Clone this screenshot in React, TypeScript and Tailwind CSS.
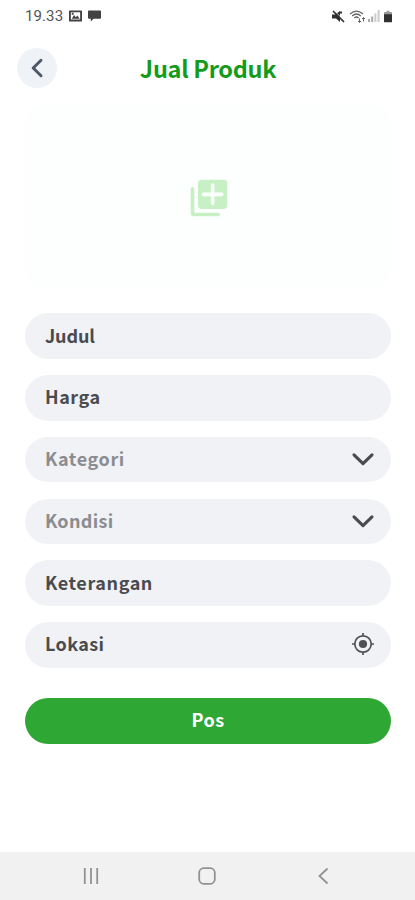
import type { ReactNode } from "react";

const FIELDS = [
  { label: "Judul", spacing: "tracking-[-0.1px]" },
  { label: "Harga", spacing: "tracking-[0.55px]" },
  { label: "Kategori", muted: true, icon: "chevron", spacing: "tracking-[0.6px]" },
  { label: "Kondisi", muted: true, icon: "chevron", spacing: "tracking-[0.3px]" },
  { label: "Keterangan", spacing: "tracking-[0.6px]" },
  { label: "Lokasi", icon: "location", spacing: "tracking-[0.4px]" },
];

const ICONS: Record<string, ReactNode> = {
  chevron: (
    <svg className="-mt-px" width="24" height="24" viewBox="0 0 24 24" fill="none" stroke="#4a4b4f" strokeWidth="3.1" strokeLinecap="round" strokeLinejoin="round">
      <path d="M3 7.8l9 8.8 9-8.8" />
    </svg>
  ),
  location: (
    <svg className="-mt-px" width="24" height="24" viewBox="0 0 24 24" fill="none" stroke="#505155" strokeWidth="1.7">
      <circle cx="12" cy="12" r="8.2" />
      <circle cx="12" cy="12" r="4.1" fill="#505155" stroke="none" />
      <path d="M12 1v3M12 20v3M1 12h3M20 12h3" />
    </svg>
  ),
};

function StatusBar() {
  return (
    <div className="flex h-8 items-center justify-between pl-[25px] pr-[23px] text-[#555]">
      <div className="flex items-center">
        <span className="w-[44px] whitespace-nowrap font-[Roboto,sans-serif] text-[15px] leading-8 tracking-[0.1px]">19.33</span>
        <svg width="13" height="12" viewBox="0 0 14 12">
          <path fill="#424242" fillRule="evenodd" d="M1 0h12q1 0 1 1v10q0 1-1 1H1q-1 0-1-1V1q0-1 1-1ZM2 2v7.8h10V2ZM3 9l2.4-4 2 2.4L9 5.4 11.5 9ZM3 2.6h2v2H3Z" />
        </svg>
        <svg className="ml-[6px]" width="13" height="12" viewBox="0 0 14 12">
          <path fill="#424242" d="M1 0h12q1 0 1 1v7q0 1-1 1H6l-3 3V9H1Q0 9 0 8V1q0-1 1-1Z" />
        </svg>
      </div>
      <div className="flex items-center">
        <svg width="13" height="13" viewBox="0 0 13 13" fill="#303030">
          <path d="M0 4.5h3L8 1v11L4 8.5H0Z" />
          <path d="M2 .5l10.5 10.5" stroke="#fff" strokeWidth="1" />
          <path d="M1 1l11 11M8.5 3.5l1-2" stroke="#303030" strokeWidth="1.7" />
        </svg>
        <svg className="ml-1" width="17" height="13" viewBox="0 0 17 13" fill="none" stroke="#666" strokeWidth="1.2">
          <path d="M1 4Q7.5-1.8 14 4M3.2 6Q7.5 2 11.8 6M5.4 8Q7.5 6 9.6 8" />
          <path d="M10.5 8.5v4M9 11l1.5 1.5L12 11M14.5 11.5v-4M13 9l1.5-1.5L16 9" strokeWidth="1" />
        </svg>
        <svg className="ml-[2px]" width="12" height="12" viewBox="0 0 12 12">
          <path d="M0 9h2v3H0ZM3.2 6.5h2V12h-2Z" fill="#aaa" />
          <path d="M6.4 3.5h2V12h-2ZM9.6 0h2v12h-2Z" fill="#ccc" />
        </svg>
        <svg className="ml-1" width="8" height="13" viewBox="0 0 9 13">
          <path d="M3 0h3v1.5h2q1 0 1 1V5H0V2.5q0-1 1-1h2Z" fill="#999" />
          <path d="M0 4h9v8q0 1-1 1H1q-1 0-1-1Z" fill="#303030" />
        </svg>
      </div>
    </div>
  );
}

function Field({ label, muted, icon, spacing }: { label: string; muted?: boolean; icon?: string; spacing: string }) {
  return (
    <div className="flex h-[45.5px] items-center justify-between rounded-full bg-[#f0f2f6] pl-5 pr-4">
      <span className={`pb-[2px] text-[18px] font-bold ${spacing} ${muted ? "text-[#8b8c90]" : "text-[#4a4b4f]"}`}>{label}</span>
      {icon && ICONS[icon]}
    </div>
  );
}

export default function App() {
  return (
    <div className="flex h-[900px] w-[415px] flex-col overflow-hidden bg-white font-['Noto_Sans_CJK_JP',sans-serif]">
      <StatusBar />

      <header className="flex h-[73px] items-center px-[17px] pb-px">
        <button className="flex size-10 items-center justify-center rounded-full bg-[#eff3f8]">
          <svg width="20" height="20" viewBox="0 0 20 20" fill="none" stroke="#4d5966" strokeWidth="3" strokeLinecap="round" strokeLinejoin="round">
            <path d="M14 2.3L6.2 10l7.8 7.7" />
          </svg>
        </button>
        <h1 className="flex-1 whitespace-nowrap pr-[39px] pt-[2px] text-center text-[23.5px] font-bold tracking-[-0.3px] text-[#139c1b]">Jual Produk</h1>
      </header>

      <main className="flex flex-1 flex-col pl-[25px] pr-6">
        <div className="flex h-[184px] items-center justify-center rounded-[20px] bg-[#fcfffd]">
          <svg className="mr-[-1px] mt-px" width="44" height="44" viewBox="0 0 24 24" fill="#c7f1c5">
            <path d="M3 6q-1 0-1 1v13q0 2 2 2h13q1 0 1-1t-1-1H4V7q0-1-1-1Z" />
            <path fillRule="evenodd" d="M8 2h12q2 0 2 2v12q0 2-2 2H8q-2 0-2-2V4q0-2 2-2ZM13 5v4H9q-1 0-1 1t1 1h4v4q0 1 1 1t1-1v-4h4q1 0 1-1t-1-1h-4V5q0-1-1-1t-1 1Z" />
          </svg>
        </div>

        <div className="mt-[24.25px] flex flex-col gap-[16.25px]">
          {FIELDS.map((field) => (
            <Field key={field.label} {...field} />
          ))}
        </div>

        <button className="mt-[30.5px] h-[45.5px] rounded-full bg-[#2fa735] pb-[2px] text-[18px] font-bold tracking-[0.5px] text-white">Pos</button>
      </main>

      <nav className="flex h-12 items-center justify-between bg-[#f1f1f1] pl-[82px] pr-[83px]">
        <svg width="18" height="18" viewBox="0 0 18 18" stroke="#929292" strokeWidth="1.8">
          <path d="M2.8 1v16M9 1v16M15.2 1v16" />
        </svg>
        <svg width="18" height="18" viewBox="0 0 18 18" fill="none" stroke="#929292" strokeWidth="1.8">
          <rect x="1.2" y="1.2" width="15.6" height="15.6" rx="4.5" />
        </svg>
        <svg width="18" height="18" viewBox="0 0 18 18" fill="none" stroke="#929292" strokeWidth="1.8">
          <path d="M13.5 1.5L5.5 9l8 7.5" />
        </svg>
      </nav>
    </div>
  );
}
